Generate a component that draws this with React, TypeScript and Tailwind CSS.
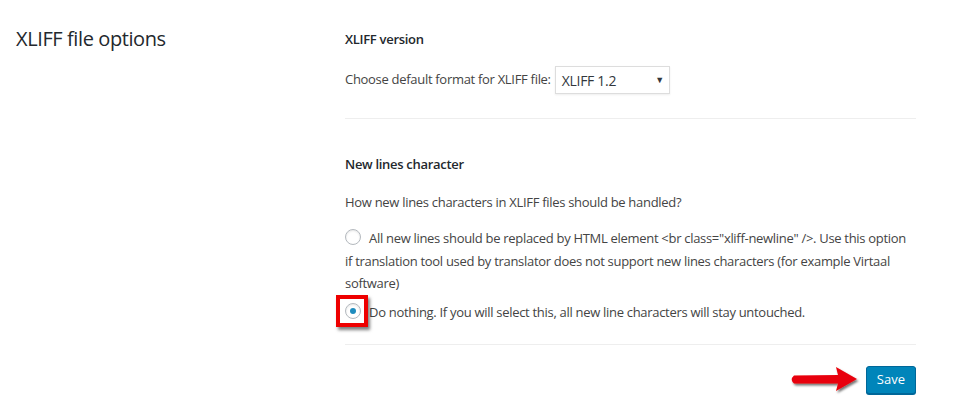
import React from "react";

const FONT = { fontFamily: '"Open Sans", "Noto Sans", Arial, sans-serif' };

function Radio({ checked }: { checked?: boolean }) {
  return (
    <span className="flex size-4 shrink-0 items-center justify-center rounded-full border border-[#b4b9be] bg-white shadow-[inset_0_1px_2px_rgba(0,0,0,0.1)]">
      {checked && <span className="size-1.5 rounded-full bg-[#1e8cbe]" />}
    </span>
  );
}

function Arrow() {
  return (
    <svg width="74" height="30" viewBox="0 0 74 30" className="shrink-0">
      <defs>
        <filter id="sh" x="-20%" y="-40%" width="140%" height="180%">
          <feDropShadow dx="1.5" dy="2" stdDeviation="1.2" floodColor="#000" floodOpacity="0.55" />
        </filter>
      </defs>
      <path
        d="M5 10.5 L49 10 L47 2 L68 14 L47 26 L49 18.5 L5 18.5 Q0.5 14.5 5 10.5 Z"
        fill="#e8000b"
        filter="url(#sh)"
      />
    </svg>
  );
}

export default function App() {
  return (
    <div className="h-[405px] w-[957px] bg-white text-[13px] tracking-[-0.3px] text-[#444]" style={FONT}>
      <div className="flex">
        <div className="w-[345px] shrink-0 pl-4 pt-[27px]">
          <h2 className="text-[20px] leading-6 font-normal tracking-[-0.4px] text-[#23282d]">XLIFF file options</h2>
        </div>

        <div className="w-[571px] pt-[31px]">
          <h3 className="text-[13px] leading-4 font-semibold text-[#23282d]">XLIFF version</h3>
          <div className="mt-[19px] flex items-center gap-1">
            <span>Choose default format for XLIFF file:</span>
            <div className="flex h-[28px] w-[115px] items-center justify-between border border-[#ddd] bg-white pl-[6px] pr-[5px] text-[14px] text-[#32373c] shadow-[0_1px_2px_rgba(0,0,0,0.07)]">
              <span>XLIFF 1.2</span>
              <span className="text-[9px]">▼</span>
            </div>
          </div>

          <div className="mt-[24px] border-t border-[#eee]" />

          <h3 className="mt-[37px] text-[13px] leading-4 font-semibold text-[#23282d]">New lines character</h3>
          <p className="mt-[22px] leading-4">How new lines characters in XLIFF files should be handled?</p>

          <div className="mt-[17px] leading-[22.5px]">
            <label className="block">
              <span className="relative mr-2 inline-block h-px w-4">
                <span className="absolute -top-[13px] left-0">
                  <Radio />
                </span>
              </span>
              All new lines should be replaced by HTML element &lt;br class="xliff-newline" /&gt;. Use this
              option if translation tool used by translator does not support new lines characters (for example
              Virtaal software)
            </label>
            <label className="mt-[6px] block">
              <span className="relative mr-2 inline-block h-px w-4">
                <span className="absolute -top-[13px] left-0">
                  <Radio checked />
                  <span className="absolute -top-[8px] -left-[9px] size-[32px] border-[4px] border-[#ee0000] shadow-[2px_3px_3px_rgba(0,0,0,0.5)]" />
                </span>
              </span>
              Do nothing. If you will select this, all new line characters will stay untouched.
            </label>
          </div>

          <div className="mt-[21px] border-t border-[#eee]" />

          <div className="mt-[20px] flex items-center justify-end gap-[3px]">
            <Arrow />
            <button className="h-[28px] rounded-[3px] border border-[#006799] bg-[#0085ba] px-[10px] text-[13px] tracking-normal text-white shadow-[0_1px_0_#006799]">
              Save
            </button>
          </div>
        </div>
      </div>
    </div>
  );
}
